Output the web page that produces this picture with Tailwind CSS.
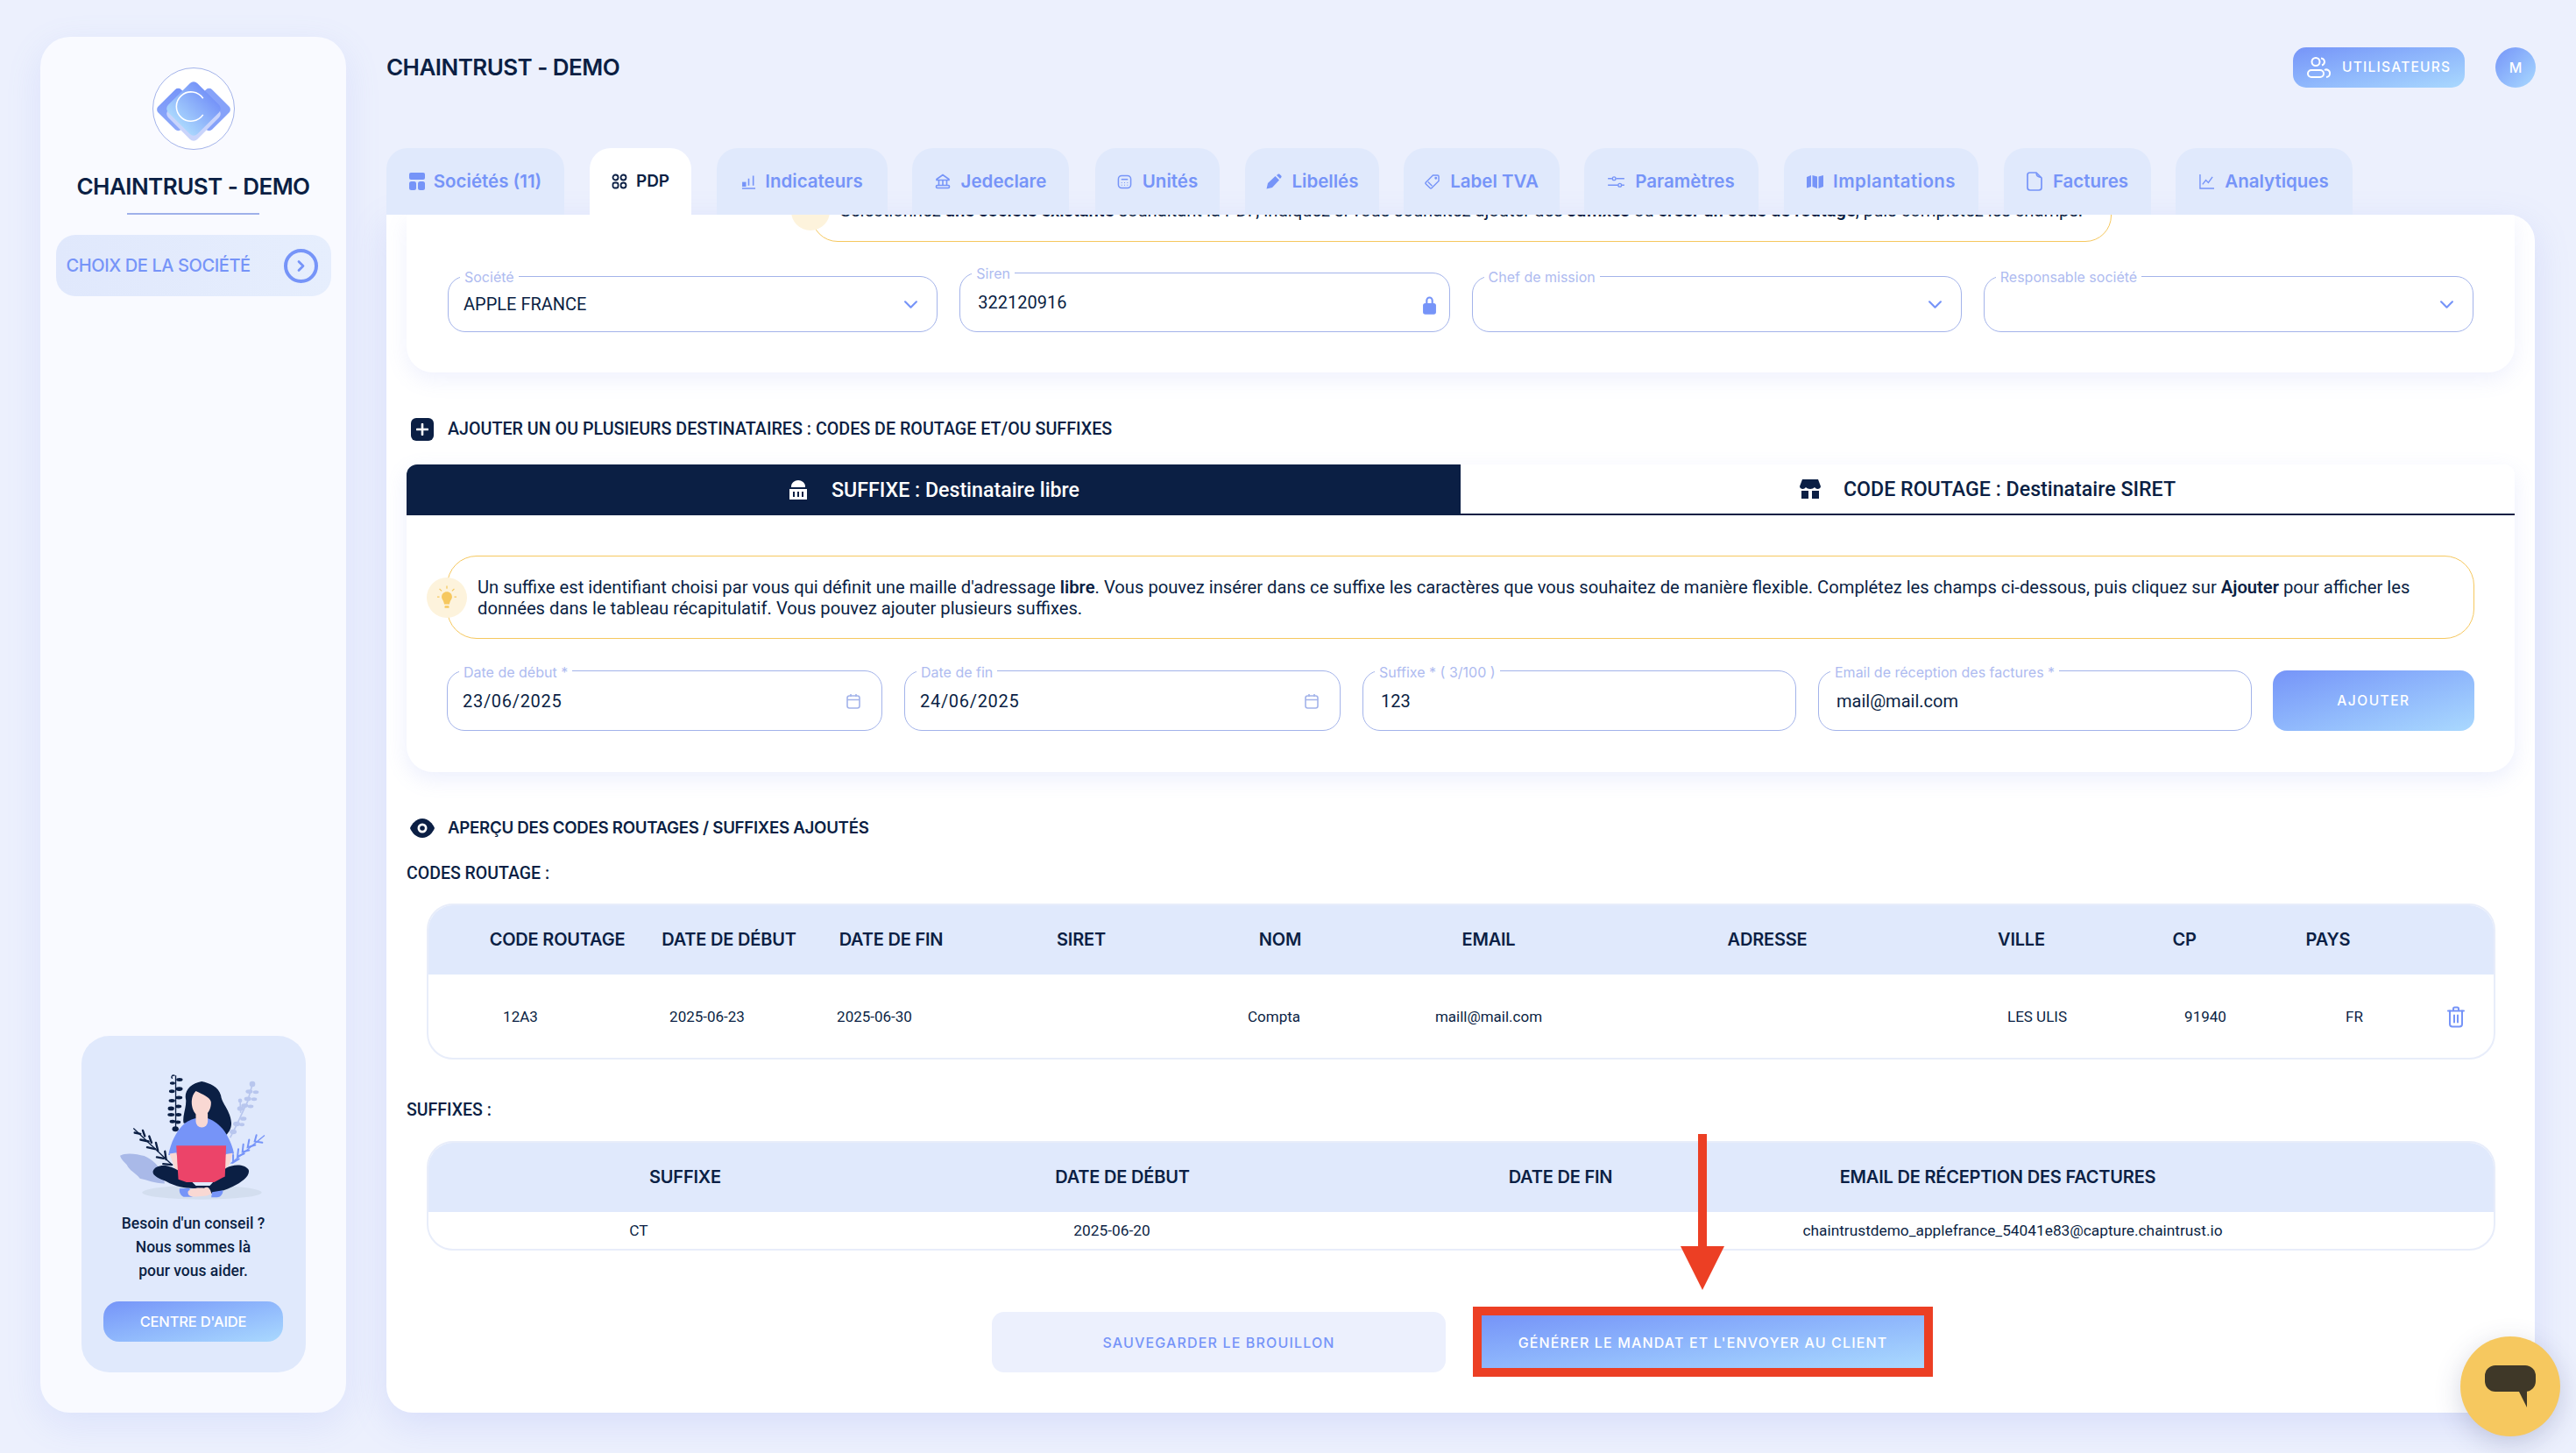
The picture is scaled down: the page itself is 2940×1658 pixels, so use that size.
<!DOCTYPE html>
<html lang="fr">

<head>
    <meta charset="UTF-8">
    <meta name="viewport" content="width=device-width, initial-scale=1.0">
    <title>Chaintrust - Demo</title>
    <script src="https://cdn.jsdelivr.net/npm/@tailwindcss/browser@4"></script>
</head>

<body class="relative w-[2940px] h-[1658px] overflow-hidden bg-[#ecf0fd] font-['Roboto',sans-serif] text-[#0b1f44] antialiased">
    <div class="flex items-start pl-[46px] pt-[42px]">

        <!-- Sidebar -->
        <aside class="flex flex-col items-center w-[349px] h-[1570px] rounded-[34px] bg-[#f9faff] shadow-[0_12px_40px_rgba(120,140,240,0.14)]">
            <div class="mt-[35px] w-[94px] h-[94px] rounded-full bg-white border border-[#a3b3ea] overflow-hidden">
                <svg viewBox="0 0 94 94" class="w-full h-full">
                    <defs>
                        <linearGradient id="lg1" x1="0" y1="0" x2="1" y2="1"><stop offset="0" stop-color="#7694f8"/><stop offset="1" stop-color="#90abfa"/></linearGradient>
                        <linearGradient id="lg2" x1="0.5" y1="0" x2="0.5" y2="1"><stop offset="0" stop-color="#7694f8"/><stop offset="1" stop-color="#a9d6fd"/></linearGradient>
                    </defs>
                    <rect x="10" y="29" width="38" height="38" rx="5" transform="rotate(45 29 48)" fill="url(#lg1)"/>
                    <rect x="46" y="29" width="38" height="38" rx="5" transform="rotate(45 65 48)" fill="#86a2f9"/>
                    <rect x="23" y="29" width="48" height="48" rx="6" transform="rotate(45 47 53)" fill="#c9d4fb"/>
                    <rect x="23" y="23" width="48" height="48" rx="6" transform="rotate(45 47 47)" fill="url(#lg2)"/>
                    <path d="M60 36 A17 17 0 1 0 60 55" transform="translate(-2 -1)" fill="none" stroke="#fff" stroke-width="1.6"/>
                </svg>
            </div>
            <h2 class="mt-[24px] text-[26px] leading-[36px] font-semibold whitespace-nowrap font-['Inter',sans-serif] tracking-[-0.55px]">CHAINTRUST - DEMO</h2>
            <div class="mt-[12px] w-[151px] h-[2px] bg-[#9fb1ea]"></div>
            <div class="mt-[23px] flex items-center justify-between w-[314px] h-[70px] pl-[12px] pr-[15px] rounded-[22px] bg-gradient-to-r from-[#e0e8fc] to-[#e6eefd]">
                <span class="text-[20px] font-medium text-[#7694f8] font-['Inter',sans-serif] tracking-[-0.4px] whitespace-nowrap">CHOIX DE LA SOCIÉTÉ</span>
                <span class="flex items-center justify-center w-[39px] h-[39px] rounded-full border-[4px] border-[#7694f8]">
                    <svg viewBox="0 0 12 12" class="w-[15px] h-[15px]" fill="none" stroke="#7694f8" stroke-width="2.2" stroke-linecap="round" stroke-linejoin="round"><path d="M4 2l4 4-4 4"/></svg>
                </span>
            </div>

            <!-- Help card -->
            <div class="mt-auto mb-[46px] flex flex-col items-center w-[256px] h-[384px] rounded-[32px] bg-[#e0e9fc]">
                <svg viewBox="400 210 520 460" class="mt-[38px] -ml-[3px] w-[173px] h-[153px] shrink-0">
                    <ellipse cx="693" cy="633" rx="205" ry="24" fill="#d3deef"/>
                    <path d="M412 507C430 495 470 500 495 508C525 520 545 545 560 568L565 602C530 602 505 590 480 585C465 565 445 560 435 538C425 528 415 518 412 507Z" fill="#a9b9e8"/>
                    <g stroke="#b8c6ee" stroke-width="5" fill="none"><path d="M866 262L850 320L815 395L790 445"/><path d="M824 318L826 360"/></g>
                    <g fill="#b8c6ee">
                        <circle cx="866" cy="261" r="10"/><ellipse cx="855" cy="287" rx="12" ry="7"/><ellipse cx="878" cy="289" rx="10" ry="6"/><ellipse cx="850" cy="312" rx="12" ry="7"/><ellipse cx="872" cy="313" rx="10" ry="6"/><ellipse cx="840" cy="335" rx="12" ry="7"/><ellipse cx="860" cy="338" rx="10" ry="6"/><ellipse cx="825" cy="345" rx="11" ry="8"/><circle cx="824" cy="318" r="7"/><ellipse cx="835" cy="380" rx="11" ry="7"/><ellipse cx="812" cy="398" rx="12" ry="8"/><ellipse cx="830" cy="400" rx="9" ry="6"/><ellipse cx="800" cy="425" rx="12" ry="8"/>
                    </g>
                    <path d="M600 232C590 228 586 238 592 242M603 232V420" stroke="#0b1f44" stroke-width="4" fill="none"/>
                    <g fill="#0b1f44">
                        <ellipse cx="616" cy="246" rx="11" ry="6"/><ellipse cx="592" cy="258" rx="9" ry="5"/><ellipse cx="615" cy="278" rx="12" ry="7"/><ellipse cx="590" cy="286" rx="10" ry="6"/><ellipse cx="614" cy="308" rx="12" ry="6"/><ellipse cx="590" cy="318" rx="11" ry="6"/><ellipse cx="612" cy="338" rx="11" ry="6"/><ellipse cx="587" cy="345" rx="11" ry="7"/><ellipse cx="612" cy="366" rx="11" ry="6"/><ellipse cx="587" cy="366" rx="12" ry="6"/><ellipse cx="610" cy="392" rx="10" ry="6"/><ellipse cx="592" cy="390" rx="10" ry="6"/><ellipse cx="602" cy="415" rx="11" ry="9"/>
                    </g>
                    <path d="M458 413L590 538" stroke="#0b1f44" stroke-width="4" fill="none"/>
                    <g fill="none" stroke="#0b1f44" stroke-width="7" stroke-linecap="round">
                        <path d="M462 428L482 432"/><path d="M490 420L497 440"/><path d="M482 452L510 458"/><path d="M512 440L520 462"/><path d="M505 478L532 484"/><path d="M535 462L542 490"/><path d="M538 512L562 516"/><path d="M566 492L570 520"/><path d="M560 535L590 538"/>
                    </g>
                    <path d="M908 437L792 534" stroke="#7694f8" stroke-width="4" fill="none"/>
                    <g fill="none" stroke="#7694f8" stroke-width="6" stroke-linecap="round">
                        <path d="M880 436L874 458L900 462"/><path d="M855 452L850 478L876 470"/><path d="M835 468L832 494L855 488"/><path d="M818 484L815 510L838 500"/><path d="M800 505L800 530L820 518"/>
                    </g>
                    <path d="M692 252C720 258 750 270 758 300C762 330 790 350 794 395C794 415 785 425 778 435L630 395C625 370 640 345 638 315C630 285 655 258 692 252Z" fill="#0b1f44"/>
                    <path d="M578 505C585 465 605 420 635 395C650 384 665 378 680 378H712C735 385 760 405 775 430C790 455 800 480 803 500L770 505H600Z" fill="#7694f8"/>
                    <rect x="672" y="345" width="41" height="65" rx="20" fill="#f9d8d3"/>
                    <path d="M672 285C695 296 720 305 724 322C726 345 712 372 690 372C670 372 656 345 658 318C659 305 664 293 672 285Z" fill="#f9d8d3"/>
                    <path d="M582 500L606 496L616 560L600 552Z" fill="#f9d8d3"/>
                    <path d="M775 502L798 498L788 535L768 560Z" fill="#f9d8d3"/>
                    <path d="M525 560C530 545 550 538 575 542C610 550 640 575 672 610L720 610L775 550C800 535 840 535 853 555C860 575 830 598 800 612C775 625 750 632 725 636L680 618C650 620 610 618 570 595C545 585 522 575 525 560Z" fill="#0b1f44"/>
                    <path d="M616 620L650 618L660 648H630C620 645 614 632 616 620Z" fill="#7694f8"/>
                    <path d="M728 632L765 626C766 640 755 650 745 650H725Z" fill="#7694f8"/>
                    <path d="M645 630C650 620 680 615 700 618C710 612 720 615 725 635C725 645 690 648 660 647C650 646 644 640 645 630Z" fill="#f9d8d3"/>
                    <path d="M605 472H776L772 578L735 598H640L612 588Z" fill="#ec4469"/>
                </svg>
                <p class="mt-[10px] text-[17.5px] leading-[27px] font-medium text-center">Besoin d'un conseil ?<br>Nous sommes là<br>pour vous aider.</p>
                <button class="mt-[21px] w-[205px] h-[46px] rounded-[18px] bg-gradient-to-br from-[#7694f8] to-[#aad9fe] text-white text-[16.5px] font-medium font-['Inter',sans-serif] tracking-[-0.2px]">CENTRE D'AIDE</button>
            </div>
        </aside>

        <!-- Main column -->
        <div class="ml-[46px] w-[2452px]">
            <header class="flex items-center justify-between h-[70px]">
                <h1 class="text-[26px] font-semibold font-['Inter',sans-serif] tracking-[-0.55px] whitespace-nowrap mt-[-2px]">CHAINTRUST - DEMO</h1>
                <div class="flex items-center gap-[35px] mr-[-1px]">
                    <button class="flex items-center gap-[13px] w-[196px] h-[46px] pl-[16px] rounded-[15px] bg-gradient-to-br from-[#7694f8] to-[#aad9fe] text-white text-[15.5px] font-medium font-['Inter',sans-serif] tracking-[1.25px]">
                        <svg viewBox="0 0 27 26" class="w-[27px] h-[26px]" fill="none" stroke="#fff" stroke-width="2"><circle cx="10" cy="6.5" r="4.5"/><path d="M16 2.5a4.5 4.5 0 0 1 4 4 4.5 4.5 0 0 1-3 4"/><rect x="1" y="16" width="18" height="8" rx="4"/><path d="M20 16a4 4 0 0 1 6 4 4 4 0 0 1-4 4"/></svg>
                        UTILISATEURS
                    </button>
                    <span class="flex items-center justify-center w-[46px] h-[46px] rounded-full bg-gradient-to-br from-[#7694f8] to-[#aad9fe] text-white text-[16px] font-medium font-['Inter',sans-serif]">M</span>
                </div>
            </header>

            <!-- Tabs -->
            <nav class="flex items-stretch h-[76px] mt-[57px] text-[20.5px] font-semibold font-['Inter',sans-serif] tracking-[0px] text-[#7694f8]">
                <a class="flex items-center justify-center gap-[10px] w-[203px] rounded-t-[24px] bg-[#e0e9fc] whitespace-nowrap">
                    <svg viewBox="0 0 18 20" class="w-[18px] h-[20px]" fill="#7694f8"><rect width="18" height="8" rx="2"/><rect y="10" width="8" height="10" rx="2.5"/><rect x="10" y="10" width="8" height="10" rx="2.5"/></svg>
                    Sociétés (11)
                </a>
                <a class="flex items-center justify-center gap-[10px] w-[116px] ml-[29px] rounded-t-[24px] bg-white text-[#0b1f44] text-[19px] whitespace-nowrap">
                    <svg viewBox="0 0 18 18" class="w-[18px] h-[18px]" fill="none" stroke="#0b1f44" stroke-width="1.8"><circle cx="4.5" cy="4.5" r="3"/><rect x="10.5" y="1.5" width="6" height="6" rx="3"/><rect x="1.5" y="10.5" width="6" height="6" rx="2"/><circle cx="13.5" cy="13.5" r="3"/></svg>
                    PDP
                </a>
                <a class="flex items-center justify-center gap-[10px] w-[195px] ml-[29px] rounded-t-[24px] bg-[#e0e9fc] whitespace-nowrap">
                    <svg viewBox="0 0 18 18" class="w-[17px] h-[17px]" fill="none" stroke="#7694f8" stroke-width="1.7"><path d="M1 17H17M3.5 13.5V10M9 13.5V5M14.5 13.5V1.5"/><rect x="2" y="10" width="3" height="4" fill="#7694f8"/></svg>
                    Indicateurs
                </a>
                <a class="flex items-center justify-center gap-[12px] w-[179px] ml-[28px] rounded-t-[24px] bg-[#e0e9fc] whitespace-nowrap">
                    <svg viewBox="0 0 18 18" class="w-[18px] h-[18px]" fill="none" stroke="#7694f8" stroke-width="1.6"><path d="M2 6.5L9 1.5L16 6.5V7.5H2Z"/><path d="M4.5 8V13M9 8V13M13.5 8V13"/><rect x="1.5" y="13.5" width="15" height="3" rx="1.2"/></svg>
                    Jedeclare
                </a>
                <a class="flex items-center justify-center gap-[12px] w-[142px] ml-[30px] rounded-t-[24px] bg-[#e0e9fc] whitespace-nowrap">
                    <svg viewBox="0 0 18 18" class="w-[17px] h-[17px]" fill="none" stroke="#7694f8" stroke-width="1.6"><rect x="1.5" y="1.5" width="15" height="15" rx="4"/><path d="M5 6H13" /><path d="M5 10H6M8.5 10H9.5M12 10H13M5 13H6M8.5 13H9.5M12 13H13" stroke-width="1.2"/></svg>
                    Unités
                </a>
                <a class="flex items-center justify-center gap-[12px] w-[153px] ml-[29px] rounded-t-[24px] bg-[#e0e9fc] whitespace-nowrap">
                    <svg viewBox="0 0 18 18" class="w-[18px] h-[18px]" fill="#7694f8"><path d="M0.5 17.5L2 11L10.5 3L15 7.5L7 16Z"/><path d="M12 2L13.5 0.8C14.2 0.3 15 0.3 15.6 0.9L17.2 2.4C17.8 3 17.8 3.9 17.2 4.5L16 6Z"/></svg>
                    Libellés
                </a>
                <a class="flex items-center justify-center gap-[12px] w-[178px] ml-[28px] rounded-t-[24px] bg-[#e0e9fc] whitespace-nowrap">
                    <svg viewBox="0 0 18 18" class="w-[17px] h-[17px]" fill="none" stroke="#7694f8" stroke-width="1.5"><path d="M10 1H15.5C16.3 1 17 1.7 17 2.5V8L8.5 16.5C7.9 17.1 7 17.1 6.4 16.5L1.5 11.6C0.9 11 0.9 10.1 1.5 9.5Z"/><circle cx="13.5" cy="4.5" r="0.8"/><path d="M4 9L9 14"/></svg>
                    Label TVA
                </a>
                <a class="flex items-center justify-center gap-[12px] w-[199px] ml-[28px] rounded-t-[24px] bg-[#e0e9fc] whitespace-nowrap">
                    <svg viewBox="0 0 20 16" class="w-[19px] h-[15px]" fill="none" stroke="#7694f8" stroke-width="1.5"><path d="M0 4H5M10 4H20M0 12H12M17 12H20"/><circle cx="7.5" cy="4" r="2"/><circle cx="14.5" cy="12" r="2"/></svg>
                    Paramètres
                </a>
                <a class="flex items-center justify-center gap-[11px] w-[222px] ml-[29px] rounded-t-[24px] bg-[#e0e9fc] whitespace-nowrap tracking-[0.4px]">
                    <svg viewBox="0 0 19 15" class="w-[19px] h-[15px]" fill="#7694f8"><path d="M0 2L5 0V13L0 14.5Z"/><path d="M6.5 0L12 1.5V15L6.5 13Z"/><path d="M13.5 1.5L19 0V13L13.5 15Z"/></svg>
                    Implantations
                </a>
                <a class="flex items-center justify-center gap-[12px] w-[168px] ml-[29px] rounded-t-[24px] bg-[#e0e9fc] whitespace-nowrap">
                    <svg viewBox="0 0 18 22" class="w-[18px] h-[22px]" fill="none" stroke="#7694f8" stroke-width="1.7"><path d="M3.5 1H11L17 7V18C17 19.7 15.7 21 14 21H4C2.3 21 1 19.7 1 18V3.5C1 2.1 2.1 1 3.5 1Z"/><path d="M11 1.5C11 4.5 12.5 6 16.5 6.5" stroke-width="1.4"/></svg>
                    Factures
                </a>
                <a class="flex items-center justify-center gap-[12px] w-[202px] ml-[28px] rounded-t-[24px] bg-[#e0e9fc] whitespace-nowrap">
                    <svg viewBox="0 0 18 18" class="w-[17px] h-[17px]" fill="none" stroke="#7694f8" stroke-width="1.5"><path d="M1 0V17H18"/><path d="M4 12L8 7L11 10L16 3"/></svg>
                    Analytiques
                </a>
            </nav>

            <!-- Main card -->
            <main class="h-[1367px] overflow-hidden rounded-tr-[30px] rounded-b-[30px] bg-white shadow-[0_12px_40px_rgba(120,140,240,0.18)] px-[23px]">

                <!-- Company card, scrolled under the tabs -->
                <section class="flex flex-col h-[180px] rounded-b-[30px] bg-white shadow-[0_8px_24px_rgba(120,140,240,0.12)] px-[47px]">
                    <div class="relative -mt-[64px] ml-[415px] flex items-center justify-center shrink-0 w-[1484px] h-[95px] pt-[24px] rounded-[30px] border-[1.5px] border-[#f6c85f] text-[20.2px] whitespace-nowrap">
                        <span class="absolute -left-[24px] top-[35px] flex items-center justify-center w-[44px] h-[46px] rounded-full bg-[#fdf3dc]">
                            <svg viewBox="0 0 12 14" class="w-[12px] h-[28px]" fill="#f6c85f"><ellipse cx="6" cy="4" rx="5" ry="4"/><path d="M3 6H9L8 11H4Z"/></svg>
                        </span>
                        <p>Sélectionnez <b class="font-semibold">une société existante</b> souhaitant la PDP, indiquez si vous souhaitez ajouter des <b class="font-semibold">suffixes</b> ou <b class="font-semibold">créer un code de routage</b>, puis complétez les champs.</p>
                    </div>
                    <div class="grid grid-cols-4 gap-[25px] items-end mt-[35px]">
                        <div class="relative flex items-center justify-between h-[64px] pl-[17px] pr-[22px] rounded-[20px] border-[1.5px] border-[#a3b3ea] text-[20px]">
                            <label class="absolute -top-[10px] left-[13px] px-[5px] bg-white text-[16px] leading-[20px] text-[#aebbf0] font-['Inter',sans-serif]">Société</label>
                            APPLE FRANCE
                            <svg viewBox="0 0 14 8" class="w-[15px] h-[9px]" fill="none" stroke="#7694f8" stroke-width="2" stroke-linecap="round" stroke-linejoin="round"><path d="M1 1L7 7L13 1"/></svg>
                        </div>
                        <div class="relative flex items-center justify-between h-[68px] pl-[20px] pr-[14px] rounded-[20px] border-[1.5px] border-[#a3b3ea] text-[20px]">
                            <label class="absolute -top-[10px] left-[13px] px-[5px] bg-white text-[16px] leading-[20px] text-[#aebbf0] font-['Inter',sans-serif]">Siren</label>
                            322120916
                            <svg viewBox="0 0 16 20" class="w-[17px] h-[22px] mt-[6px]" fill="#7694f8"><path d="M4 8V5a4 4 0 0 1 8 0v3h-2V5a2 2 0 0 0-4 0v3Z"/><rect x="1" y="8" width="14" height="12" rx="2.5"/></svg>
                        </div>
                        <div class="relative flex items-center justify-end h-[64px] pr-[22px] rounded-[20px] border-[1.5px] border-[#a3b3ea]">
                            <label class="absolute -top-[10px] left-[13px] px-[5px] bg-white text-[16px] leading-[20px] text-[#aebbf0] font-['Inter',sans-serif]">Chef de mission</label>
                            <svg viewBox="0 0 14 8" class="w-[15px] h-[9px]" fill="none" stroke="#7694f8" stroke-width="2" stroke-linecap="round" stroke-linejoin="round"><path d="M1 1L7 7L13 1"/></svg>
                        </div>
                        <div class="relative flex items-center justify-end h-[64px] pr-[22px] rounded-[20px] border-[1.5px] border-[#a3b3ea]">
                            <label class="absolute -top-[10px] left-[13px] px-[5px] bg-white text-[16px] leading-[20px] text-[#aebbf0] font-['Inter',sans-serif]">Responsable société</label>
                            <svg viewBox="0 0 14 8" class="w-[15px] h-[9px]" fill="none" stroke="#7694f8" stroke-width="2" stroke-linecap="round" stroke-linejoin="round"><path d="M1 1L7 7L13 1"/></svg>
                        </div>
                    </div>
                </section>

                <!-- Add recipients -->
                <div class="flex items-center gap-[16px] h-[26px] mt-[52px] pl-[5px]">
                    <span class="flex items-center justify-center w-[26px] h-[26px] rounded-[6px] bg-[#0b1f44]">
                        <svg viewBox="0 0 14 14" class="w-[14px] h-[14px]" fill="none" stroke="#fff" stroke-width="2.6" stroke-linecap="round"><path d="M7 1V13M1 7H13"/></svg>
                    </span>
                    <h3 class="text-[19.7px] font-medium whitespace-nowrap">AJOUTER UN OU PLUSIEURS DESTINATAIRES : CODES DE ROUTAGE ET/OU SUFFIXES</h3>
                </div>

                <section class="mt-[27px] h-[351px] rounded-t-[12px] rounded-b-[30px] bg-white shadow-[0_8px_24px_rgba(120,140,240,0.14)]">
                    <div class="flex h-[58px]">
                        <div class="flex items-center justify-center gap-[26px] w-[1203px] rounded-tl-[12px] bg-[#0b1f44] text-white text-[23.2px] font-medium">
                            <svg viewBox="0 0 24 22" class="w-[24px] h-[22px]" fill="#fff"><path d="M4 7C4 3 8 0 12 0S20 3 20 7V8H4Z"/><path fill-rule="evenodd" d="M2 10H22V22H2ZM6 13V19H8V13ZM11 13V19H13V13ZM16 13V19H18V13Z"/></svg>
                            SUFFIXE : Destinataire libre
                        </div>
                        <div class="flex items-center justify-center gap-[26px] flex-1 rounded-tr-[12px] border-b-2 border-[#0b1f44] bg-white text-[23.2px] font-medium">
                            <svg viewBox="0 0 24 22" class="w-[24px] h-[22px]" fill="#0b1f44"><path d="M3 0H21L24 8C24 10 22 11 20.5 11C19 11 18 10 17 9C16 10 14 11 12 11S8 10 7 9C6 10 5 11 3.5 11C2 11 0 10 0 8Z"/><path d="M2 13H10V22H2ZM14 13H22V22H14Z"/></svg>
                            CODE ROUTAGE : Destinataire SIRET
                        </div>
                    </div>
                    <div class="relative mt-[46px] mx-[46px] flex items-center h-[95px] pl-[34px] pr-[30px] rounded-[34px] border-[1.5px] border-[#f6c85f] text-[20.2px] leading-[24px]">
                        <span class="absolute -left-[24px] top-[24px] flex items-center justify-center w-[46px] h-[46px] rounded-full bg-[#fdf3dc]">
                            <svg viewBox="0 0 26 32" class="w-[22px] h-[28px]" fill="#f6c85f"><path d="M13 8C17 8 20 11 20 15C20 18 17 20 16.5 25H9.500C9 20 6 18 6 15C6 11 9 8 13 8Z"/><rect x="10" y="27" width="6" height="3" rx="1"/><path d="M13 0V4M3 4L6 7M23 4L20 7M0 15H3M23 15H26" stroke="#f6c85f" stroke-width="1.5"/></svg>
                        </span>
                        <p>Un suffixe est identifiant choisi par vous qui définit une maille d'adressage <b class="font-semibold">libre</b>. Vous pouvez insérer dans ce suffixe les caractères que vous souhaitez de manière flexible. Complétez les champs ci-dessous, puis cliquez sur <b class="font-semibold">Ajouter</b> pour afficher les données dans le tableau récapitulatif. Vous pouvez ajouter plusieurs suffixes.</p>
                    </div>
                    <div class="flex items-end mt-[36px] mx-[46px] gap-[25px]">
                        <div class="relative flex items-center justify-between w-[497px] h-[69px] pl-[17px] pr-[24px] rounded-[20px] border-[1.5px] border-[#a3b3ea] text-[20px] tracking-[0.7px]">
                            <label class="absolute -top-[9px] left-[13px] px-[5px] bg-white text-[16px] leading-[20px] tracking-normal text-[#aebbf0] font-['Inter',sans-serif]">Date de début *</label>
                            23/06/2025
                            <svg viewBox="0 0 16 18" class="w-[16px] h-[18px]" fill="none" stroke="#a3b3ea" stroke-width="1.6"><rect x="1" y="3" width="14" height="14" rx="2.5"/><path d="M1 7.500H15M5 1V4M11 1V4"/></svg>
                        </div>
                        <div class="relative flex items-center justify-between w-[498px] h-[69px] pl-[17px] pr-[24px] rounded-[20px] border-[1.5px] border-[#a3b3ea] text-[20px] tracking-[0.7px]">
                            <label class="absolute -top-[9px] left-[13px] px-[5px] bg-white text-[16px] leading-[20px] tracking-normal text-[#aebbf0] font-['Inter',sans-serif]">Date de fin</label>
                            24/06/2025
                            <svg viewBox="0 0 16 18" class="w-[16px] h-[18px]" fill="none" stroke="#a3b3ea" stroke-width="1.6"><rect x="1" y="3" width="14" height="14" rx="2.5"/><path d="M1 7.500H15M5 1V4M11 1V4"/></svg>
                        </div>
                        <div class="relative flex items-center w-[495px] h-[69px] pl-[20px] rounded-[20px] border-[1.5px] border-[#a3b3ea] text-[20px]">
                            <label class="absolute -top-[9px] left-[13px] px-[5px] bg-white text-[16px] leading-[20px] text-[#aebbf0] font-['Inter',sans-serif]">Suffixe * ( 3/100 )</label>
                            123
                        </div>
                        <div class="relative flex items-center w-[495px] h-[69px] pl-[20px] rounded-[20px] border-[1.5px] border-[#a3b3ea] text-[20px]">
                            <label class="absolute -top-[9px] left-[13px] px-[5px] bg-white text-[16px] leading-[20px] text-[#aebbf0] font-['Inter',sans-serif]">Email de réception des factures *</label>
                            mail@mail.com
                        </div>
                        <button class="w-[230px] h-[69px] -ml-[1px] rounded-[16px] bg-gradient-to-br from-[#7694f8] to-[#aad9fe] text-white text-[15.5px] font-medium font-['Inter',sans-serif] tracking-[1.5px]">AJOUTER</button>
                    </div>
                </section>

                <!-- Preview -->
                <div class="flex items-center gap-[15px] h-[24px] mt-[52px] pl-[4px]">
                    <svg viewBox="0 0 28 22" class="w-[28px] h-[22px]"><path fill="#0b1f44" d="M14 0C21 0 26 6 28 11C26 16 21 22 14 22S2 16 0 11C2 6 7 0 14 0Z"/><circle cx="14" cy="11" r="5.500" fill="#fff"/><circle cx="14" cy="11" r="2.800" fill="#0b1f44"/></svg>
                    <h3 class="text-[18.7px] font-semibold font-['Inter',sans-serif] tracking-[-0.3px] whitespace-nowrap">APERÇU DES CODES ROUTAGES / SUFFIXES AJOUTÉS</h3>
                </div>
                <p class="mt-[28px] text-[19.5px] font-medium leading-[24px]">CODES ROUTAGE :</p>

                <div class="mt-[22px] ml-[23px] w-[2361px] h-[178px] rounded-[30px] border-2 border-[#e8edfa] overflow-hidden">
                    <div class="flex items-center h-[81px] -mt-[2px] pl-[47px] bg-[#e0e9fc] text-[20px] font-semibold font-['Inter',sans-serif] tracking-[-0.2px] text-center whitespace-nowrap">
                        <span class="w-[200px]">CODE ROUTAGE</span><span class="w-[192px]">DATE DE DÉBUT</span><span class="w-[178px]">DATE DE FIN</span><span class="w-[256px]">SIRET</span><span class="w-[198px]">NOM</span><span class="w-[278px]">EMAIL</span><span class="w-[358px]">ADRESSE</span><span class="w-[222px]">VILLE</span><span class="w-[150px]">CP</span><span class="w-[178px]">PAYS</span>
                    </div>
                    <div class="flex items-center h-[97px] -ml-[1px] text-[17px] text-center whitespace-nowrap">
                        <span class="w-[212px]">12A3</span><span class="w-[214px]">2025-06-23</span><span class="w-[168px]">2025-06-30</span><span class="w-[218px]"></span><span class="w-[308px]">Compta</span><span class="w-[182px]">maill@mail.com</span><span class="w-[426px]"></span><span class="w-[218px]">LES ULIS</span><span class="w-[166px]">91940</span><span class="w-[174px]">FR</span>
                        <span class="flex justify-center w-[58px]">
                            <svg viewBox="0 0 20 24" class="w-[20px] h-[25px]" fill="none" stroke="#7694f8" stroke-width="2" stroke-linecap="round"><path d="M1 5H19M7 5V2.500C7 1.700 7.700 1 8.500 1H11.500C12.300 1 13 1.700 13 2.500V5"/><path d="M3 5V20C3 21.700 4.300 23 6 23H14C15.700 23 17 21.700 17 20V5"/><path d="M8 10V18M12 10V18"/></svg>
                        </span>
                    </div>
                </div>

                <p class="mt-[46px] text-[19.5px] font-medium leading-[24px]">SUFFIXES :</p>

                <div class="mt-[23px] ml-[23px] w-[2361px] h-[125px] rounded-[30px] border-2 border-[#e8edfa] overflow-hidden">
                    <div class="flex items-center h-[81px] -mt-[2px] -ml-[1px] bg-[#e0e9fc] text-[20px] font-semibold font-['Inter',sans-serif] tracking-[-0.2px] text-center whitespace-nowrap">
                        <span class="w-[588px]">SUFFIXE</span><span class="w-[410px]">DATE DE DÉBUT</span><span class="w-[590px]">DATE DE FIN</span><span class="w-[408px]">EMAIL DE RÉCEPTION DES FACTURES</span>
                    </div>
                    <div class="flex items-center h-[43px] -ml-[1px] text-[17.3px] text-center whitespace-nowrap">
                        <span class="w-[482px]">CT</span><span class="w-[598px]">2025-06-20</span><span class="w-[400px]"></span><span class="w-[658px]">chaintrustdemo_applefrance_54041e83@capture.chaintrust.io</span>
                    </div>
                </div>

                <!-- Actions -->
                <div class="flex items-center mt-[64px] ml-[668px] text-[16px] font-medium font-['Inter',sans-serif] tracking-[1.15px] whitespace-nowrap">
                    <button class="w-[518px] h-[69px] pt-[2px] rounded-[14px] bg-[#ecf0fd] text-[#7694f8]">SAUVEGARDER LE BROUILLON</button>
                    <button class="ml-[31px] w-[525px] h-[80px] pt-[2px] border-[10px] border-[#ec3f24] bg-gradient-to-br from-[#7694f8] to-[#aad9fe] text-white">GÉNÉRER LE MANDAT ET L'ENVOYER AU CLIENT</button>
                </div>
            </main>
        </div>
    </div>

    <!-- Arrow drawn over the page -->
    <svg viewBox="0 0 50 178" class="absolute left-[1918px] top-[1294px] w-[50px] h-[178px]">
        <path d="M20 0H30V128H50L25 178L0 128H20Z" fill="#ec3f24"/>
    </svg>

    <!-- Chat bubble -->
    <div class="absolute left-[2808px] top-[1525px] flex items-center justify-center w-[114px] h-[114px] rounded-full bg-[#f6c85f] shadow-[0_8px_30px_rgba(60,70,120,0.22)]">
        <svg viewBox="0 0 58 48" class="w-[58px] h-[48px]" fill="#3f3828"><rect width="58" height="30" rx="12"/><path d="M38 28H48V48Z"/></svg>
    </div>
</body>

</html>
